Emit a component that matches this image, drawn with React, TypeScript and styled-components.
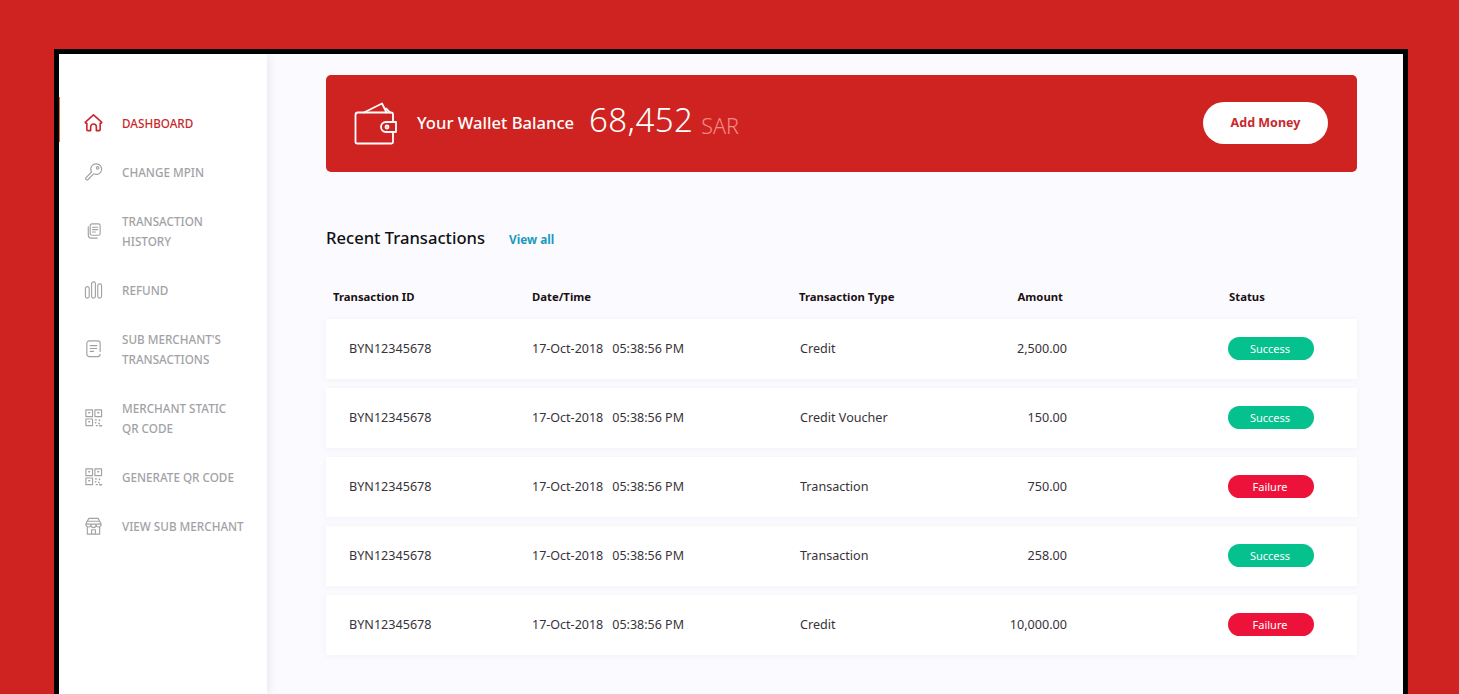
import React from 'react';
import styled, { createGlobalStyle } from 'styled-components';

const FONT = '"Noto Sans", "Open Sans", Arial, sans-serif';

const GlobalStyle = createGlobalStyle`
  html, body {
    margin: 0;
    height: 100%;
    overflow: hidden;
    background: #ce2320;
    font-family: ${FONT};
  }
  #root {
    height: 100%;
  }
`;

const Page = styled.div`
  box-sizing: border-box;
  height: 694px;
  padding: 49px 51px 0 54px;
`;

const Frame = styled.div`
  box-sizing: border-box;
  height: 100%;
  display: flex;
  border: 5px solid #000;
  border-bottom: none;
  background: #fbfbff;
`;

const Sidebar = styled.aside`
  flex: 0 0 208px;
  background: #fff;
  box-shadow: 3px 0 8px rgba(40, 40, 80, 0.08);
  padding-top: 47px;
`;

const NavList = styled.nav`
  display: flex;
  flex-direction: column;
  gap: 5px;
`;

const NavItem = styled.a<{ $active?: boolean }>`
  position: relative;
  display: flex;
  align-items: center;
  gap: 19px;
  padding: 12px 10px 12px 25px;
  font-size: 11.7px;
  font-weight: 500;
  line-height: 20px;
  color: ${({ $active }) => ($active ? '#c8282d' : '#a2a2a6')};

  ${({ $active }) =>
    $active &&
    `&::before {
      content: '';
      position: absolute;
      left: 0;
      top: -4px;
      width: 1px;
      height: 45px;
      background: #e2702c;
    }`}
`;

const NavIcon = styled.svg`
  flex: 0 0 19px;
  width: 19px;
  height: 20px;
  fill: none;
  stroke: currentColor;
  stroke-width: 1.2;
  stroke-linecap: round;
  stroke-linejoin: round;
`;

const HomeIcon = styled(NavIcon)`
  stroke-width: 1.7;
`;

const NavLabel = styled.span`
  display: flex;
  flex-direction: column;
`;

const Content = styled.main`
  flex: 1;
  padding: 21px 46px 0 59px;
`;

const BalanceCard = styled.section`
  height: 97px;
  box-sizing: border-box;
  display: flex;
  align-items: center;
  padding: 0 29px 0 28px;
  background: #ce2320;
  border-radius: 5px;
  color: #fff;
`;

const WalletIcon = styled.svg`
  width: 43px;
  height: 43px;
  margin-right: 20px;
  fill: none;
  stroke: #fff;
  stroke-width: 1.8;
  stroke-linecap: round;
  stroke-linejoin: round;
`;

const BalanceLabel = styled.span`
  font-size: 16.6px;
  font-weight: 500;
  margin-right: 15px;
  margin-bottom: 2px;
`;

const BalanceValue = styled.span`
  font-size: 33px;
  font-weight: 300;
  letter-spacing: 0.4px;
  margin-right: 8px;
  margin-bottom: 9px;
`;

const Currency = styled.span`
  font-size: 21.5px;
  font-weight: 300;
  color: #f58b86;
  margin-top: 3px;
`;

const AddMoney = styled.button`
  margin-left: auto;
  margin-bottom: 2px;
  width: 125px;
  height: 42px;
  border: none;
  border-radius: 21px;
  background: #fff;
  color: #c8282d;
  font-family: ${FONT};
  font-size: 12.5px;
  font-weight: 700;
`;

const SectionHead = styled.div`
  display: flex;
  align-items: baseline;
  gap: 24px;
  margin-top: 54px;
`;

const SectionTitle = styled.h2`
  margin: 0;
  font-size: 16.6px;
  font-weight: 500;
  line-height: 24px;
  color: #111;
`;

const ViewAll = styled.a`
  font-size: 11.8px;
  font-weight: 700;
  color: #1b9abb;
`;

const columns = '206px 267px 129px 139px 1fr';

const HeadRow = styled.div`
  display: grid;
  grid-template-columns: ${columns};
  align-items: center;
  height: 20px;
  margin-top: 36px;
  margin-bottom: 13px;
  font-size: 11.3px;
  font-weight: 700;
  color: #1a1014;
`;

const HeadCell = styled.span<{ $indent?: number; $right?: number }>`
  padding-left: ${({ $indent }) => $indent ?? 0}px;
  padding-right: ${({ $right }) => $right ?? 0}px;
  text-align: ${({ $right }) => ($right ? 'right' : 'left')};
`;

const Rows = styled.div`
  display: flex;
  flex-direction: column;
  gap: 9px;
`;

const Row = styled.div`
  box-sizing: border-box;
  display: grid;
  grid-template-columns: ${columns};
  align-items: center;
  height: 60px;
  padding-bottom: 2px;
  background: #fff;
  box-shadow: 0 1px 6px rgba(40, 40, 80, 0.05);
  font-size: 12.6px;
  color: #38333a;
`;

const Cell = styled.span<{ $indent?: number; $end?: boolean }>`
  padding-left: ${({ $indent }) => $indent ?? 0}px;
  text-align: ${({ $end }) => ($end ? 'right' : 'left')};
`;

const DateCell = styled.span`
  display: flex;
  gap: 9px;
  font-size: 12.5px;
`;

const Badge = styled.span<{ $ok: boolean }>`
  box-sizing: border-box;
  justify-self: end;
  margin-right: 43px;
  width: 86px;
  height: 23px;
  padding-right: 2px;
  display: flex;
  align-items: center;
  justify-content: center;
  border-radius: 11.5px;
  background: ${({ $ok }) => ($ok ? '#04c18d' : '#ec1239')};
  color: #fff;
  font-size: 11px;
`;

const Qr = () => (
  <NavIcon viewBox="0 0 20 20">
    <rect x="2" y="1.500" width="7" height="7" />
    <rect x="11.500" y="1.500" width="7" height="7" />
    <rect x="2" y="11" width="7" height="7" />
    <path d="M5 4.500h1M14.500 4.500h1M5 14h1M12 12h1M16 12l.5.500M12 15h.5M15.500 15.500l.5.500M13 18h1M16.500 18.200h2" strokeWidth="1.500" />
  </NavIcon>
);

const navItems: { id: string; lines: string[]; icon: React.ReactNode; active?: boolean }[] = [
  {
    id: 'dashboard',
    lines: ['DASHBOARD'],
    active: true,
    icon: (
      <HomeIcon viewBox="0 0 20 20">
        <path d="M1.500 9 10 1.500 18.500 9c.5.800-.2 1.500-1.500 1.300V17a1 1 0 0 1-1 1h-3v-4a3 3 0 0 0-6 0v4H4a1 1 0 0 1-1-1v-6.700C1.700 10.500 1 9.800 1.500 9Z" />
      </HomeIcon>
    ),
  },
  {
    id: 'mpin',
    lines: ['CHANGE MPIN'],
    icon: (
      <NavIcon viewBox="0 0 20 20">
        <path d="M13 1.500a5.500 5.500 0 1 1-2.600 10.300L4.300 17.900c-1 .900-3 .400-2.600-1.400L8 10a5.500 5.500 0 0 1 5-8.500Z" />
        <circle cx="14.300" cy="5.700" r="1.300" />
      </NavIcon>
    ),
  },
  {
    id: 'history',
    lines: ['TRANSACTION', 'HISTORY'],
    icon: (
      <NavIcon viewBox="0 0 20 20">
        <rect x="6.500" y="2.500" width="10.500" height="12" rx="2" />
        <path d="M4.500 5.500v8.500a3.500 3.500 0 0 0 3.500 3.500h6M9 6h5.500M9 8.500h5.500M9 11h3" />
      </NavIcon>
    ),
  },
  {
    id: 'refund',
    lines: ['REFUND'],
    icon: (
      <NavIcon viewBox="0 0 20 20">
        <rect x="1.500" y="6.500" width="4" height="12" rx="2" />
        <rect x="8" y="1.500" width="4" height="17" rx="2" />
        <rect x="14.500" y="3.500" width="4" height="15" rx="2" />
      </NavIcon>
    ),
  },
  {
    id: 'sub-transactions',
    lines: ["SUB MERCHANT'S", 'TRANSACTIONS'],
    icon: (
      <NavIcon viewBox="0 0 20 20">
        <path d="M17 15.500c0 1.500-.8 2.500-2.500 2.500H5.500A2.500 2.500 0 0 1 3 15.500V4a2.500 2.500 0 0 1 2.500-2.500h9A2.500 2.500 0 0 1 17 4v8.500" />
        <path d="M6.500 6.500h7M6.500 9.500h7M6.500 12.500h3.500" />
      </NavIcon>
    ),
  },
  { id: 'static-qr', lines: ['MERCHANT STATIC', 'QR CODE'], icon: <Qr /> },
  { id: 'generate-qr', lines: ['GENERATE QR CODE'], icon: <Qr /> },
  {
    id: 'view-sub',
    lines: ['VIEW SUB MERCHANT'],
    icon: (
      <NavIcon viewBox="0 0 20 20">
        <path d="M5 2h10l3 6H2l3-6ZM2 8a2.700 2.700 0 0 0 5.300 1 2.700 2.700 0 0 0 5.400 0A2.700 2.700 0 0 0 18 8" />
        <path d="M3.500 11v7.500h13V11M8 18.500V14h4v4.500M4 5h12" />
      </NavIcon>
    ),
  },
];

const transactions = [
  { type: 'Credit', amount: '2,500.00', ok: true },
  { type: 'Credit Voucher', amount: '150.00', ok: true },
  { type: 'Transaction', amount: '750.00', ok: false },
  { type: 'Transaction', amount: '258.00', ok: true },
  { type: 'Credit', amount: '10,000.00', ok: false },
];

export default function App() {
  return (
    <>
      <GlobalStyle />
      <Page>
        <Frame>
          <Sidebar>
            <NavList>
              {navItems.map((item) => (
                <NavItem key={item.id} $active={item.active}>
                  {item.icon}
                  <NavLabel>
                    {item.lines.map((line) => (
                      <span key={line}>{line}</span>
                    ))}
                  </NavLabel>
                </NavItem>
              ))}
            </NavList>
          </Sidebar>
          <Content>
            <BalanceCard>
              <WalletIcon viewBox="0 0 43 43">
                <path d="M10 10.500 28 1.500l4.500 9" />
                <path d="M32 6.500l4 4" />
                <path d="M39 20v-7.500a2 2 0 0 0-2-2H4A2.500 2.500 0 0 0 1.500 13v27a1.500 1.500 0 0 0 1.500 1.500h34.500A1.500 1.500 0 0 0 39 40v-9" />
                <path d="M32 20h10v10H32a5 5 0 0 1 0-10Z" />
                <circle cx="33" cy="25" r="1.500" />
              </WalletIcon>
              <BalanceLabel>Your Wallet Balance</BalanceLabel>
              <BalanceValue>68,452</BalanceValue>
              <Currency>SAR</Currency>
              <AddMoney>Add Money</AddMoney>
            </BalanceCard>

            <SectionHead>
              <SectionTitle>Recent Transactions</SectionTitle>
              <ViewAll>View all</ViewAll>
            </SectionHead>

            <HeadRow>
              <HeadCell $indent={7}>Transaction ID</HeadCell>
              <HeadCell>Date/Time</HeadCell>
              <HeadCell>Transaction Type</HeadCell>
              <HeadCell $right={4}>Amount</HeadCell>
              <HeadCell $indent={162}>Status</HeadCell>
            </HeadRow>

            <Rows>
              {transactions.map((tx, i) => (
                <Row key={i}>
                  <Cell $indent={23}>BYN12345678</Cell>
                  <DateCell>
                    <span>17-Oct-2018</span>
                    <span>05:38:56 PM</span>
                  </DateCell>
                  <Cell $indent={1}>{tx.type}</Cell>
                  <Cell $end>{tx.amount}</Cell>
                  <Badge $ok={tx.ok}>{tx.ok ? 'Success' : 'Failure'}</Badge>
                </Row>
              ))}
            </Rows>
          </Content>
        </Frame>
      </Page>
    </>
  );
}
